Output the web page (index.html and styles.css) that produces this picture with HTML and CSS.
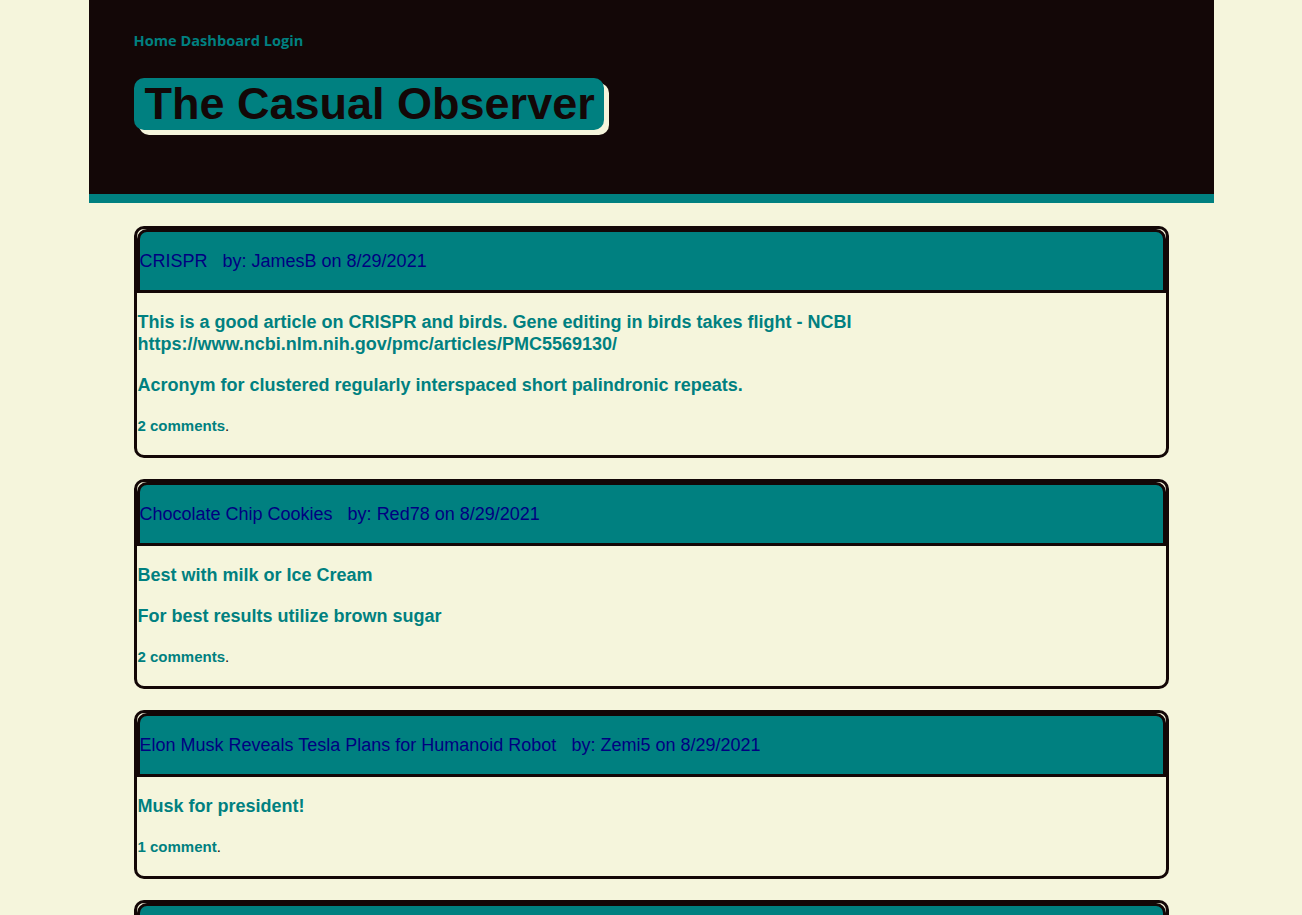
FILE: index.html
```html
<!DOCTYPE html>
<html lang="en">
<head>
<meta charset="utf-8">
<title>The Casual Observer</title>
<link rel="stylesheet" href="styles.css">
</head>
<body>
<header class="site-header">
  <nav class="nav">
    <a href="#">Home</a>
    <a href="#">Dashboard</a>
    <a href="#">Login</a>
  </nav>
  <h1 class="brand">The Casual Observer</h1>
</header>
<main class="posts">
  <article class="post">
    <div class="post-head"><a href="#">CRISPR</a>&nbsp;&nbsp; by: JamesB on 8/29/2021</div>
    <div class="post-body">
      <p>This is a good article on CRISPR and birds. Gene editing in birds takes flight - NCBI https://www.ncbi.nlm.nih.gov/pmc/articles/PMC5569130/</p>
      <p>Acronym for clustered regularly interspaced short palindronic repeats.</p>
      <p class="comments"><a href="#">2 comments</a>.</p>
    </div>
  </article>
  <article class="post">
    <div class="post-head"><a href="#">Chocolate Chip Cookies</a>&nbsp;&nbsp; by: Red78 on 8/29/2021</div>
    <div class="post-body">
      <p>Best with milk or Ice Cream</p>
      <p>For best results utilize brown sugar</p>
      <p class="comments"><a href="#">2 comments</a>.</p>
    </div>
  </article>
  <article class="post">
    <div class="post-head"><a href="#">Elon Musk Reveals Tesla Plans for Humanoid Robot</a>&nbsp;&nbsp; by: Zemi5 on 8/29/2021</div>
    <div class="post-body">
      <p>Musk for president!</p>
      <p class="comments"><a href="#">1 comment</a>.</p>
    </div>
  </article>
  <article class="post">
    <div class="post-head"><a href="#">Next Post</a>&nbsp;&nbsp; by: JamesB on 8/29/2021</div>
    <div class="post-body">
      <p>More to come.</p>
      <p class="comments"><a href="#">0 comments</a>.</p>
    </div>
  </article>
</main>
</body>
</html>
```
FILE: styles.css
```css
html, body {
  margin: 0;
  padding: 0;
  background: #f5f5dc;
}
body {
  font-family: "Liberation Sans", Arial, sans-serif;
  color: #130707;
}
.site-header {
  width: 1125px;
  margin: 0 auto;
  box-sizing: border-box;
  background: #130707;
  border-bottom: 9px solid #008080;
  padding: 31px 45px 0;
  height: 203px;
}
.nav {
  font-family: "Open Sans", sans-serif;
  font-weight: 700;
  font-size: 14.6px;
  line-height: 18px;
}
.nav a {
  color: #008080;
  text-decoration: none;
}
.brand {
  display: inline-block;
  margin: 29px 0 0;
  padding: 0 9px 0 11px;
  background: #008080;
  color: #130707;
  font-size: 45px;
  line-height: 52px;
  border-radius: 10px;
  box-shadow: 5px 5px 0 #f5f5dc;
}
.posts {
  width: 1035px;
  margin: 23px auto 0;
  display: flex;
  flex-direction: column;
  gap: 21px;
}
.post {
  border: 3px solid #130707;
  border-radius: 10px;
}
.post-head {
  display: flex;
  align-items: center;
  height: 58px;
  background: #008080;
  border: 3px solid #130707;
  border-radius: 10px 10px 0 0;
  color: #000080;
  font-size: 18px;
  white-space: pre;
}
.post-head a {
  color: #000080;
  text-decoration: none;
}
.post-body {
  padding: 0 1px;
  overflow: hidden;
}
.post-body p {
  margin: 18px 0 19px;
  font-size: 18px;
  font-weight: 700;
  line-height: 22px;
  color: #008080;
}
.post-body p.comments {
  margin-bottom: 18px;
  font-size: 15px;
  line-height: 22px;
  color: #130707;
  font-weight: 400;
}
.comments a {
  color: #008080;
  font-weight: 700;
  text-decoration: none;
}
```
